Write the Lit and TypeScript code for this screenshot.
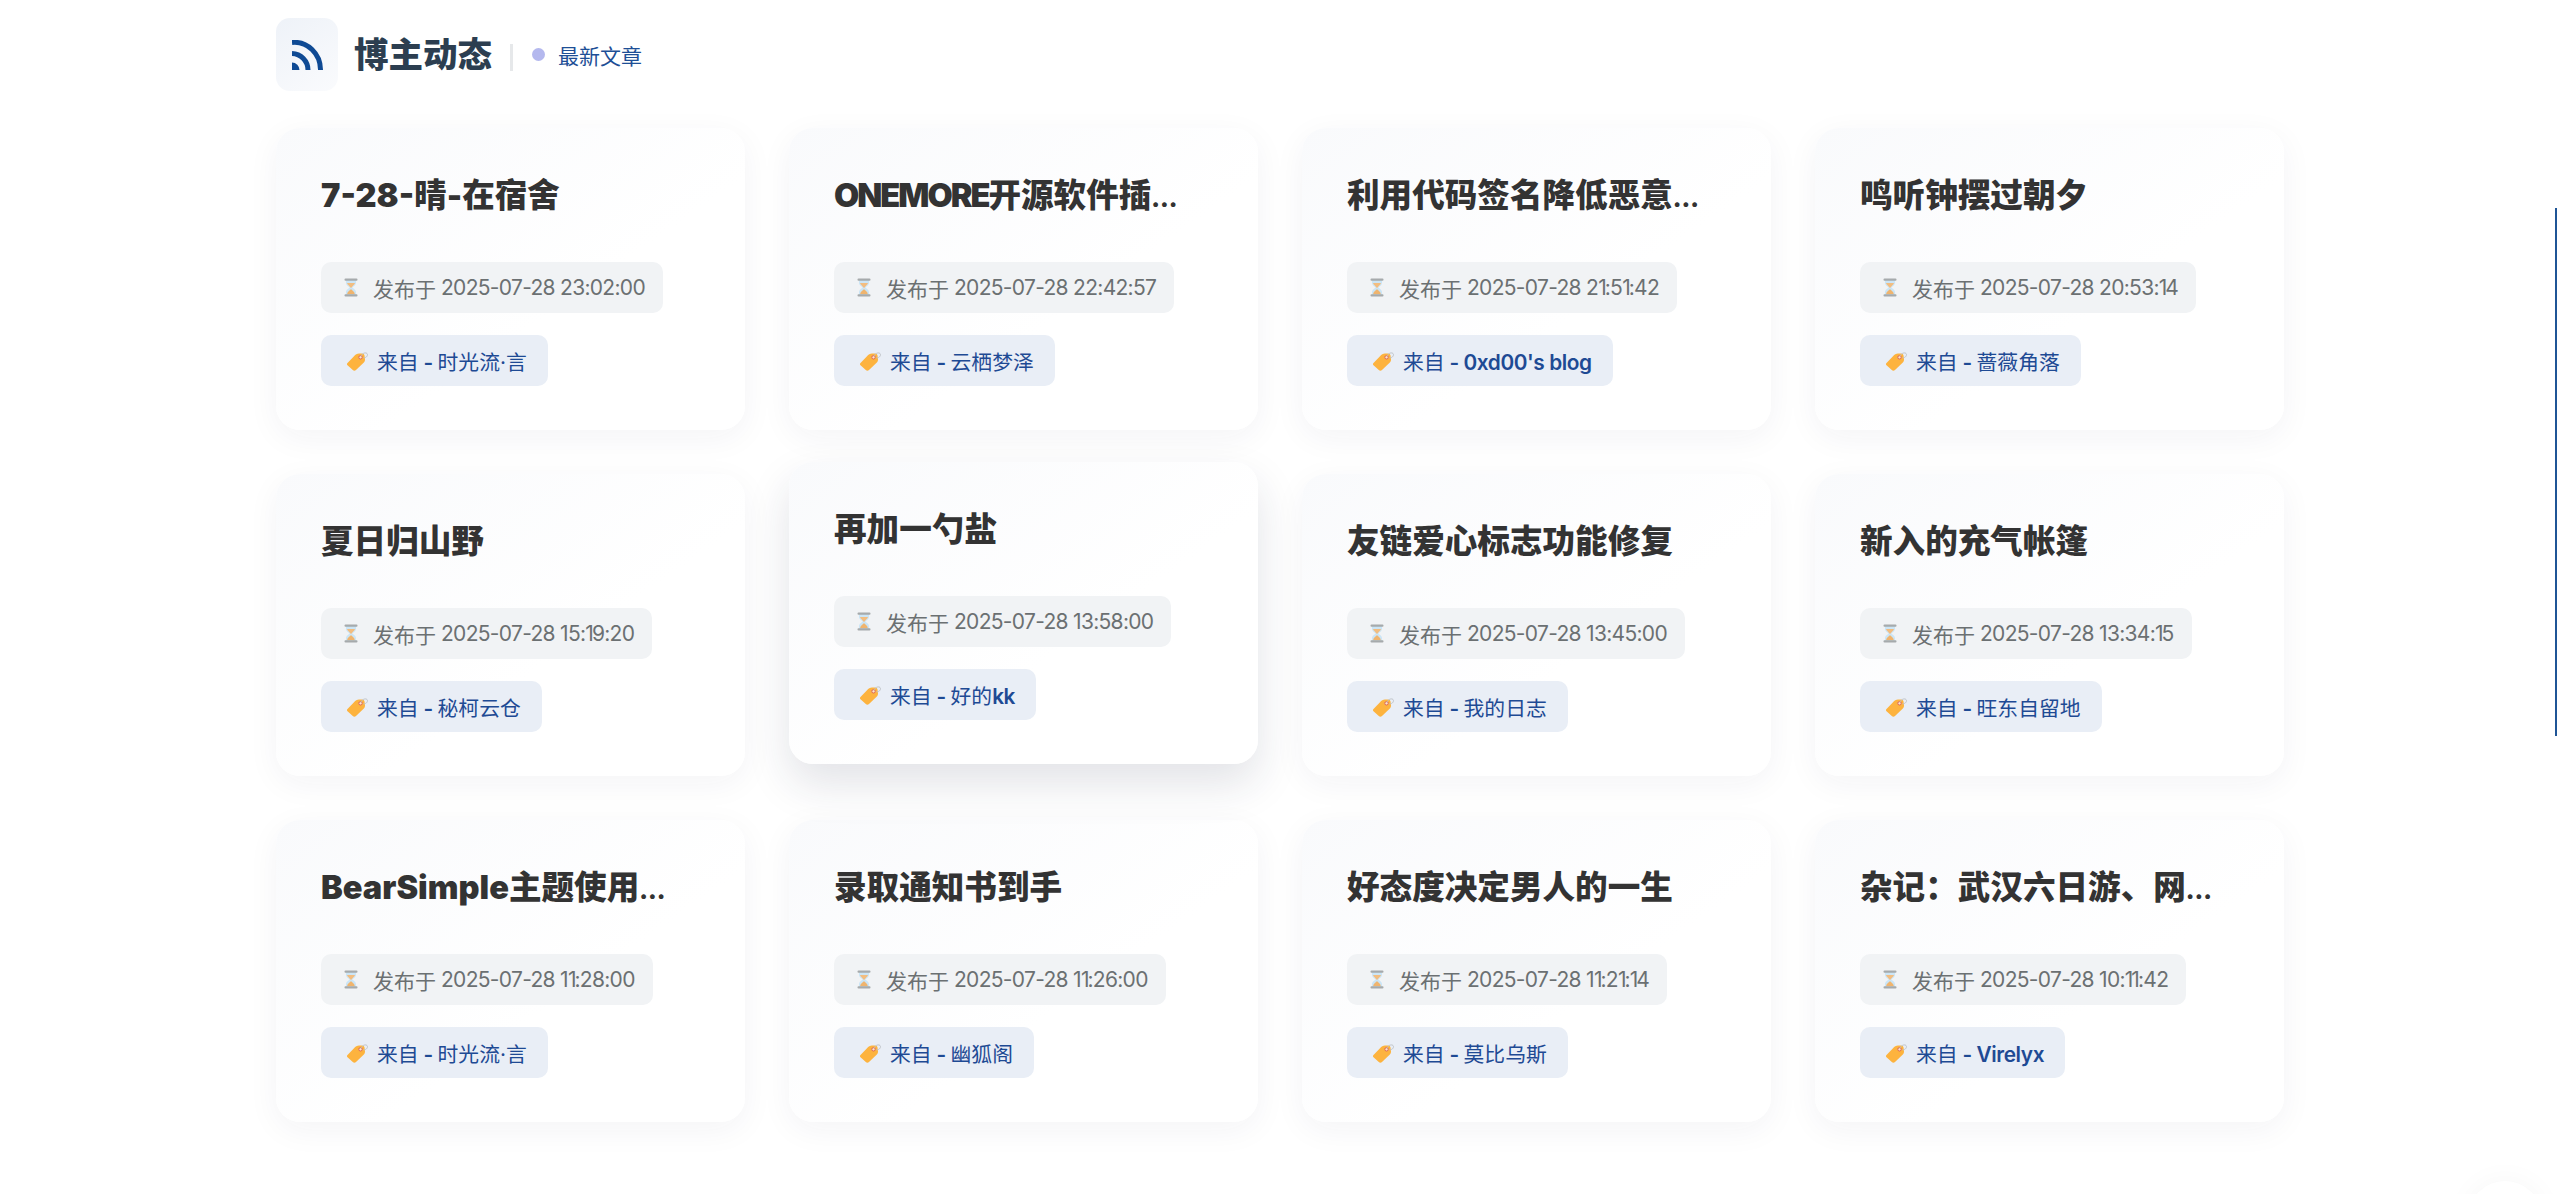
import { LitElement, html, css } from "lit";
import { customElement } from "lit/decorators.js";

const posts = [
  ["7-28-晴-在宿舍", "2025-07-28 23:02:00", "时光流·言"],
  ["ONEMORE开源软件插…", "2025-07-28 22:42:57", "云栖梦泽"],
  ["利用代码签名降低恶意…", "2025-07-28 21:51:42", "0xd00's blog"],
  ["鸣听钟摆过朝夕", "2025-07-28 20:53:14", "蔷薇角落"],
  ["夏日归山野", "2025-07-28 15:19:20", "秘柯云仓"],
  ["再加一勺盐", "2025-07-28 13:58:00", "好的kk"],
  ["友链爱心标志功能修复", "2025-07-28 13:45:00", "我的日志"],
  ["新入的充气帐篷", "2025-07-28 13:34:15", "旺东自留地"],
  ["BearSimple主题使用…", "2025-07-28 11:28:00", "时光流·言"],
  ["录取通知书到手", "2025-07-28 11:26:00", "幽狐阁"],
  ["好态度决定男人的一生", "2025-07-28 11:21:14", "莫比乌斯"],
  ["杂记：武汉六日游、网…", "2025-07-28 10:11:42", "Virelyx"],
];

const hourglass = html`<svg class="hg" viewBox="0 0 16 19" width="16" height="19">
  <path d="M3 2h10v3c0 2.500-3 3.300-3.500 4.500.5 1.200 3.500 2 3.500 4.500v3H3v-3c0-2.500 3-3.300 3.500-4.500C6 8.300 3 7.500 3 5z" fill="#cbe5f6"/>
  <path d="M4 5h8c-.4 2-2.600 2.800-3.200 4.400H7.200C6.600 7.800 4.400 7 4 5z" fill="#f2bd80"/>
  <path d="M8 11c-.8 1.500-3.600 2.200-3.800 5.200h7.600C11.600 13.200 8.800 12.500 8 11z" fill="#efb46e"/>
  <rect x="1.500" y="0.500" width="13" height="2.200" rx="1" fill="#a6aaac"/>
  <rect x="1.500" y="16.300" width="13" height="2.200" rx="1" fill="#a6aaac"/>
</svg>`;

const tag = html`<svg class="tg" viewBox="0 0 22 20" width="22" height="20">
  <path d="M1.500 12 8 5.200C9.500 3.600 11 2.800 13 2.600l3-.2c1.400 0 2.300.8 2.500 2.200l.5 3.600c.1 1.400-.4 2.600-1.400 3.600L10 19c-1 1-2.200 1-3.200.1L1.500 14.200c-.7-.7-.7-1.500 0-2.200z" fill="#fdb33e"/>
  <circle cx="14.500" cy="6.300" r="1.700" fill="#fde6c8" stroke="#dc6258" stroke-width="1"/>
  <path d="M15 5.500c.5-3 4.500-4.500 6-3s-.5 4.500-3.500 4.300" fill="none" stroke="#bfc3c8" stroke-width="1"/>
</svg>`;

/** Latin runs render heavier than the CJK around them in the source labels. */
const mixed = (s: string) =>
  s.split(/([\x00-\x7f]+)/).map((part, i) => (i % 2 ? html`<span class="lat">${part}</span>` : part));

/** Titles: capital runs sit tighter, and the ellipsis is a small one. */
const title = (s: string) =>
  s.split(/([A-Z]{2,}|…)/).map((part, i) =>
    i % 2 ? html`<span class=${part === "…" ? "ell" : "caps"}>${part}</span>` : part);

const stamp = (s: string) =>
  [...s].map((ch, i) => (ch === "1" && i > 11 ? html`<span class="one">1</span>` : ch));

@customElement("app-root")
export class AppRoot extends LitElement {
  static styles = css`
    :host { display: block; background: #fff; min-height: 1194px; box-sizing: border-box; padding: 18px 276px 0; overflow: hidden; position: relative; font-family: Inter, "Noto Sans CJK SC", sans-serif; }
    .head { display: flex; align-items: center; height: 73px; margin-bottom: 37px; }
    .ico { width: 62px; height: 73px; border-radius: 14px; background: linear-gradient(145deg, #eef2f8, #fafbfd); display: flex; align-items: center; justify-content: center; margin-right: 16px; }
    h2 { margin: 0; font-size: 34.500px; line-height: 44px; font-weight: 900; color: #2c3e50; }
    .div { width: 3px; height: 27px; background: #e6e8ea; margin: 5px 19px 0 18px; }
    .dot { width: 13px; height: 13px; border-radius: 50%; background: #b4b8ee; margin-right: 13px; }
    .sub { font-size: 21px; color: #1e4f96; }
    .grid { display: grid; grid-template-columns: repeat(4, 469px); column-gap: 44px; row-gap: 44px; }
    .card { box-sizing: border-box; height: 302px; padding: 45px; border-radius: 24px; background: linear-gradient(145deg, #f9fafc, #fff 60%); box-shadow: 0 8px 32px rgba(30, 40, 70, .05); display: flex; flex-direction: column; align-items: flex-start; min-width: 0; }
    .card.hover { transform: translateY(-12px); box-shadow: 0 20px 44px rgba(30, 40, 70, .13); }
    h3 { margin: 0 0 45px; height: 44px; flex: none; font-size: 32.600px; line-height: 44px; font-weight: 900; color: #333; white-space: nowrap; }
    .caps { letter-spacing: -2px; }
    .ell { font-size: .72em; }
    .pill { height: 51px; flex: none; box-sizing: border-box; border-radius: 10px; display: flex; align-items: center; font-size: 21px; white-space: nowrap; }
    .date { background: #f1f3f5; color: #6b7072; padding: 0 18px 0 22px; margin-bottom: 22px; }
    .stamp { letter-spacing: -.7px; margin-left: 5px; }
    .one { letter-spacing: -2px; }
    .src { background: #e9eef6; color: #1e4a94; padding: 0 21px 0 25px; white-space: pre; font-size: 20.800px; }
    .lat { font-weight: 600; letter-spacing: -.4px; }
    .hg { margin-right: 14px; flex: none; }
    .tg { margin-right: 9px; flex: none; }
    .bar { position: absolute; right: 3px; top: 208px; width: 2px; height: 528px; background: #1f5596; }
    .fab { position: absolute; right: 18px; top: 1181px; width: 74px; height: 74px; border-radius: 50%; background: #fff; box-shadow: 0 0 30px rgba(0, 0, 0, .04); }
  `;
  render() {
    return html`
      <div class="head">
        <div class="ico">
          <svg viewBox="0 0 31 30" width="31" height="30"><path d="M0 2.500A26 27.500 0 0 1 28.500 30" fill="none" stroke="#0f4a94" stroke-width="5"/><path d="M0 13.500A16.500 16.500 0 0 1 16 30" fill="none" stroke="#0f4a94" stroke-width="5"/><path d="M0 22.500A7.500 7.500 0 0 1 7.500 30H0z" fill="#0f4a94"/></svg>
        </div>
        <h2>博主动态</h2>
        <span class="div"></span>
        <span class="dot"></span>
        <span class="sub">最新文章</span>
      </div>
      <div class="grid">
        ${posts.map((p, i) => html`
          <div class="card ${i === 5 ? "hover" : ""}">
            <h3>${title(p[0])}</h3>
            <div class="pill date">${hourglass}发布于<span class="stamp">${stamp(p[1])}</span></div>
            <div class="pill src">${tag}<span>${mixed(`来自 - ${p[2]}`)}</span></div>
          </div>`)}
      </div>
      <div class="bar"></div>
      <div class="fab"></div>
    `;
  }
}
